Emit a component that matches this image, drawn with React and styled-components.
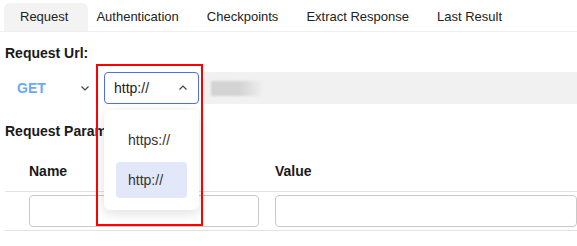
import React from 'react';
import styled, { createGlobalStyle, css } from 'styled-components';

const GlobalStyle = createGlobalStyle`
  * { box-sizing: border-box; }
  body {
    margin: 0;
    background: #fff;
    font-family: "Liberation Sans", Arial, sans-serif;
    color: #222;
  }
`;

const Page = styled.div`
  width: 577px;
  height: 246px;
  overflow: hidden;
`;

const TabBar = styled.nav`
  display: flex;
  height: 32px;
  padding: 3px 0 0 4px;
  border-bottom: 1px solid #eceef2;
`;

const Tab = styled.div`
  height: 28px;
  line-height: 28px;
  padding: 0 14px;
  font-size: 13px;
  color: #222;
  white-space: nowrap;

  ${({ $active }) => $active && css`
    background: #f3f3f4;
    border-radius: 6px 6px 0 0;
    padding: 0 20px 0 16px;
    margin-right: -6px;
  `}
`;

const Section = styled.section`
  padding: 0 5px;
`;

const SectionTitle = styled.h3`
  margin: ${({ $top }) => $top}px 0 0;
  font-size: 14px;
  line-height: 16px;
  font-weight: 700;
  color: #1a1a1a;
`;

const UrlRow = styled.div`
  display: flex;
  align-items: stretch;
  height: 32px;
  margin-top: 11px;
  margin-right: -5px;
`;

const MethodSelect = styled.div`
  width: 95px;
  display: flex;
  align-items: center;
  justify-content: space-between;
  padding: 0 10px 0 12px;
  font-size: 14px;
  font-weight: 700;
  color: #6aa9f6;
`;

const SelectBox = styled.div`
  position: relative;
  width: 95px;
  margin-left: 4px;
  display: flex;
  align-items: center;
  justify-content: space-between;
  padding: 0 10px 0 9px;
  border: 1px solid #5171d9;
  border-radius: 4px;
  font-size: 14px;
  color: #222;
`;

const UrlInput = styled.div`
  flex: 1;
  margin-left: 5px;
  background: #f1f1f1;
  display: flex;
  align-items: center;
  padding-left: 7px;
`;

const BlurredText = styled.span`
  width: 52px;
  height: 15px;
  background: linear-gradient(to right, #d3d3d3 55%, rgba(211, 211, 211, 0));
  filter: blur(1px);
`;

const Dropdown = styled.ul`
  position: absolute;
  top: 37px;
  left: -1px;
  width: 95px;
  margin: 0;
  padding: 12px;
  list-style: none;
  background: #fff;
  border-radius: 6px;
  box-shadow: 0 3px 12px rgba(0, 0, 0, 0.13);
  z-index: 5;
  display: flex;
  flex-direction: column;
  gap: 4px;
`;

const Option = styled.li`
  height: 36px;
  line-height: 36px;
  padding: 0 12px;
  font-size: 14px;
  color: #333;
  border-radius: 4px;
  background: ${({ $selected }) => ($selected ? '#e2e8fa' : 'transparent')};
`;

const Highlight = styled.div`
  position: absolute;
  left: -9px;
  top: -9px;
  width: 107px;
  height: 162px;
  border: 2px solid #ff0000;
  z-index: 6;
  pointer-events: none;
`;

const ParamTable = styled.div`
  margin-top: 13px;
  margin-right: -5px;
`;

const TableRow = styled.div`
  display: grid;
  grid-template-columns: 230px 1fr;
  column-gap: 16px;
  padding: ${({ $head }) => ($head ? '0' : '3px')} 0 ${({ $head }) => ($head ? '0' : '3px')} 24px;
  border-bottom: 1px solid #e2e2e2;
`;

const HeadCell = styled.div`
  height: 39px;
  line-height: 39px;
  font-size: 14px;
  font-weight: 700;
  color: #1a1a1a;
`;

const CellInput = styled.div`
  height: 32px;
  border: 1px solid #c9c9c9;
  border-radius: 4px;
  background: #fff;
`;

const Chevron = ({ up }) => (
  <svg width="10" height="10" viewBox="0 0 10 10">
    <polyline
      points={up ? '1.5,6.5 5,3 8.5,6.5' : '1.5,3.5 5,7 8.5,3.5'}
      fill="none"
      stroke="#444"
      strokeWidth="1.2"
    />
  </svg>
);

const tabs = ['Request', 'Authentication', 'Checkpoints', 'Extract Response', 'Last Result'];

const App = () => {
  return (
    <Page>
      <GlobalStyle />
      <TabBar>
        {tabs.map((t, i) => (
          <Tab key={t} $active={i === 0}>{t}</Tab>
        ))}
      </TabBar>

      <Section>
        <SectionTitle $top={13}>Request Url:</SectionTitle>
        <UrlRow>
          <MethodSelect>
            GET
            <Chevron />
          </MethodSelect>
          <SelectBox>
            http://
            <Chevron up />
            <Dropdown>
              <Option>https://</Option>
              <Option $selected>http://</Option>
            </Dropdown>
            <Highlight />
          </SelectBox>
          <UrlInput>
            <BlurredText />
          </UrlInput>
        </UrlRow>

        <SectionTitle $top={19}>Request Parameters:</SectionTitle>
        <ParamTable>
          <TableRow $head>
            <HeadCell>Name</HeadCell>
            <HeadCell>Value</HeadCell>
          </TableRow>
          <TableRow>
            <CellInput />
            <CellInput />
          </TableRow>
        </ParamTable>
      </Section>
    </Page>
  );
};

export default App;
